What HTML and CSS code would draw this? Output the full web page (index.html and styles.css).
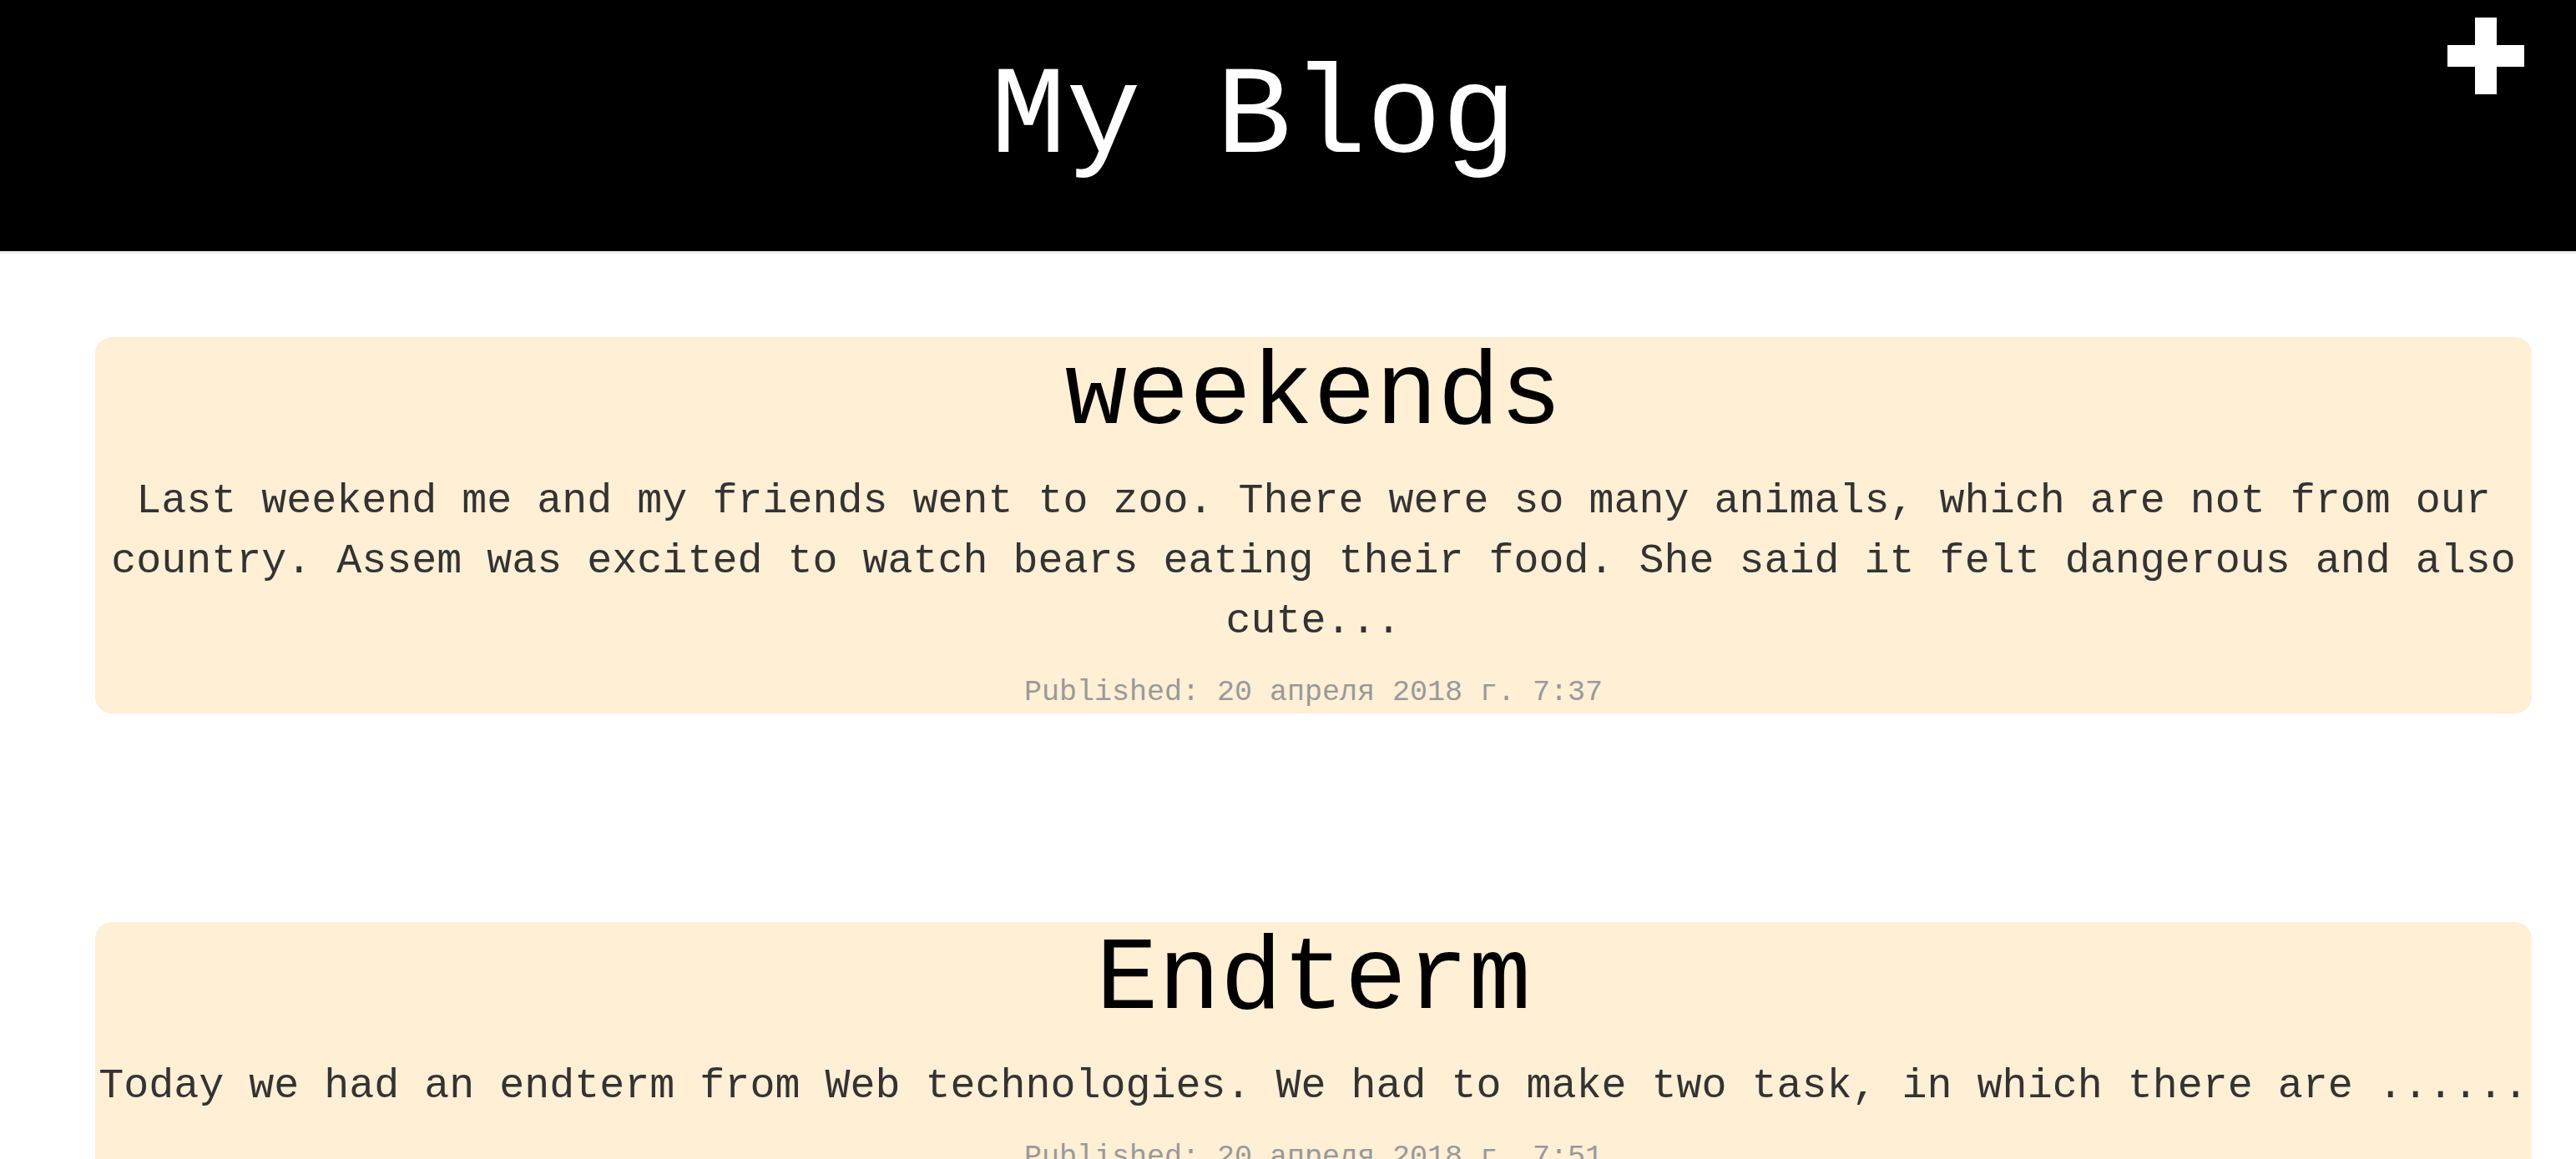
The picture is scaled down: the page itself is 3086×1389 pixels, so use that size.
FILE: index.html
```html
<!DOCTYPE html>
<html lang="en">
<head>
<meta charset="utf-8">
<title>My Blog</title>
<link rel="stylesheet" href="styles.css">
</head>
<body>
<header class="site-header">
  <h1 class="site-title">My Blog</h1>
  <a class="add-btn" href="#" aria-label="Add post">
    <svg class="add-icon" viewBox="0 0 92 92" width="92" height="92">
      <rect x="33" y="0" width="26" height="92" fill="#fff"/>
      <rect x="0" y="33" width="92" height="26" fill="#fff"/>
    </svg>
  </a>
</header>
<main class="posts">
  <article class="post">
    <h2 class="post-title">weekends</h2>
    <p class="post-body">Last weekend me and my friends went to zoo. There were so many animals, which are not from our country. Assem was excited to watch bears eating their food. She said it felt dangerous and also cute...</p>
    <p class="post-date">Published: 20 апреля 2018 г. 7:37</p>
  </article>
  <article class="post">
    <h2 class="post-title">Endterm</h2>
    <p class="post-body">Today we had an endterm from Web technologies. We had to make two task, in which there are ......</p>
    <p class="post-date">Published: 20 апреля 2018 г. 7:51</p>
  </article>
</main>
</body>
</html>
```

FILE: styles.css
```css
html, body {
  margin: 0;
  padding: 0;
  background: #fff;
  font-family: "Liberation Mono", "Courier New", monospace;
}

.site-header {
  position: relative;
  height: 301px;
  background: #000;
  border-bottom: 3px solid #eeeeee;
  display: flex;
  justify-content: center;
  padding-right: 82px;
}

.site-title {
  margin: 57px 0 0 0;
  font-size: 150px;
  font-weight: normal;
  line-height: normal;
  color: #fff;
  white-space: pre;
}

.add-btn {
  position: absolute;
  top: 21px;
  right: 62px;
  display: block;
  width: 92px;
  height: 92px;
}

.add-icon {
  display: block;
}

.posts {
  display: flex;
  flex-direction: column;
  gap: 250px;
  padding: 100px 53px 60px 114px;
}

.post {
  background: #ffefd5;
  border-radius: 20px;
  text-align: center;
  padding: 0 0 5px 0;
}

.post-title {
  margin: 0;
  font-size: 124px;
  font-weight: normal;
  line-height: normal;
  color: #000;
}

.post-body {
  margin: 21px 0 0 0;
  font-size: 50px;
  line-height: 72px;
  color: #333;
}

.post-date {
  margin: 29px 0 0 0;
  font-size: 35px;
  line-height: normal;
  color: #999;
}
```
